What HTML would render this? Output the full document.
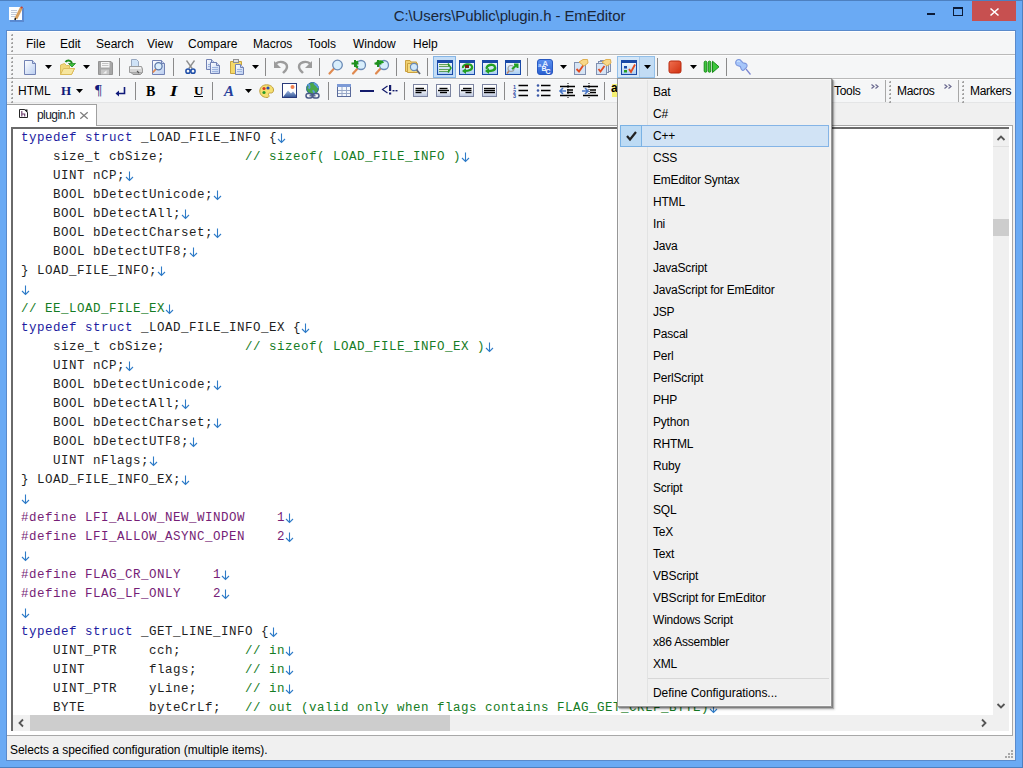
<!DOCTYPE html><html><head><meta charset="utf-8"><style>
*{margin:0;padding:0;box-sizing:border-box}
html,body{width:1023px;height:768px;overflow:hidden;background:#6aaaf4;font-family:"Liberation Sans",sans-serif;font-size:12px;color:#000}
.a{position:absolute}
svg{position:absolute;overflow:visible}
.t{position:absolute;white-space:pre;font-size:12px;line-height:14px}
.code{position:absolute;left:22px;font-family:"Liberation Mono",monospace;font-size:12.5px;letter-spacing:0.5px;line-height:19px;white-space:pre;color:#1e1e1e}
.k{color:#1c1ca0}.c{color:#157c24}.p{color:#761e76}.n{color:#2a86d0}
.sep{position:absolute;width:1px;background:#a0a0a0}
.arr{position:absolute;width:0;height:0;border-left:3.5px solid transparent;border-right:3.5px solid transparent;border-top:4px solid #000}
</style></head><body>
<div class="a" style="left:0px;top:0px;width:1023px;height:768px;background:#6aaaf4;border:1px solid #4d80c0;border-left:none"></div>
<div class="t" style="left:-2px;top:7px;width:1023px;text-align:center;font-size:15px;line-height:17px;color:#1a2638;letter-spacing:-0.1px">C:\Users\Public\plugin.h - EmEditor</div>
<div class="a" style="left:972px;top:1px;width:44px;height:20px;background:#c75050"></div>
<svg style="left:990px;top:8px" width="9" height="8"><path d="M0.5 0.5L8.5 7.5M8.5 0.5L0.5 7.5" stroke="#fff" stroke-width="1.6"/></svg>
<div class="a" style="left:953px;top:7px;width:10px;height:9px;border:1px solid #0c1c38;border-top-width:2px"></div>
<div class="a" style="left:927px;top:13px;width:8px;height:2px;background:#0c1c38"></div>
<div class="a" style="left:6px;top:30px;width:1010px;height:731px;background:#f0f0f0;border:1px solid #5a8acb"></div>
<div class="a" style="left:7px;top:31px;width:1008px;height:24px;background:#f5f6f7;border-top:1px solid #fff;border-bottom:1px solid #b9b9b9"></div>
<div class="a" style="left:7px;top:55px;width:1008px;height:24px;background:#f5f6f7;border-top:1px solid #fcfcfc;border-bottom:1px solid #b9b9b9"></div>
<div class="a" style="left:7px;top:79px;width:1008px;height:24px;background:#f5f6f7;border-top:1px solid #fcfcfc;border-bottom:1px solid #e4e5e6"></div>
<svg width="0" height="0" style="position:absolute"><defs>
<linearGradient id="gdoc" x1="0" y1="0" x2="1" y2="1"><stop offset="0" stop-color="#ffffff"/><stop offset="1" stop-color="#b9cdf0"/></linearGradient>
<linearGradient id="gfold" x1="0" y1="0" x2="0" y2="1"><stop offset="0" stop-color="#fbe9a8"/><stop offset="1" stop-color="#f0c850"/></linearGradient>
<linearGradient id="gwin" x1="0" y1="0" x2="0" y2="1"><stop offset="0" stop-color="#ffffff"/><stop offset="1" stop-color="#a9cdf2"/></linearGradient>
<linearGradient id="gbox" x1="0" y1="0" x2="0" y2="1"><stop offset="0" stop-color="#ffffff"/><stop offset="0.5" stop-color="#f4f6fa"/><stop offset="1" stop-color="#b8c4dc"/></linearGradient>
<linearGradient id="gspell" x1="0" y1="0" x2="0" y2="1"><stop offset="0" stop-color="#5a90f0"/><stop offset="1" stop-color="#2a5fd0"/></linearGradient>
<linearGradient id="gred" x1="0" y1="0" x2="1" y2="1"><stop offset="0" stop-color="#f07050"/><stop offset="1" stop-color="#d03010"/></linearGradient>
<linearGradient id="gmnt" x1="0" y1="0" x2="0" y2="1"><stop offset="0" stop-color="#9fb8e0"/><stop offset="1" stop-color="#3a5a9a"/></linearGradient>
</defs></svg>
<svg style="left:23px;top:59px" width="18" height="18" viewBox="0 0 18 18"><path d="M1.5 1.5H9.5L12.5 4.5V15.5H1.5Z" fill="url(#gdoc)" stroke="#7282b4"/><path d="M9.5 1.5V4.5H12.5" fill="#c8d4f0" stroke="#7282b4"/></svg>
<svg style="left:45px;top:65px" width="7" height="4"><path d="M0 0H7L3.5 4Z" fill="#000"/></svg>
<svg style="left:59px;top:59px" width="18" height="18" viewBox="0 0 18 18"><path d="M1.5 6L5.5 4.5L7.5 6.5H10.5V9.5H15.5L12.5 15.5H1.5Z" fill="#f0d77a" stroke="#dcbc5c"/><path d="M1.5 15.5L4.5 9.5H15.5L12.5 15.5Z" fill="#f7e69e" stroke="#dcbc5c"/><path d="M6.5 3C8 0.8 11.5 0.8 13 4" fill="none" stroke="#1f8a1f" stroke-width="2"/><path d="M9.5 4.5H16.5L13 8Z" fill="#3cbf3c" stroke="#1f8a1f" stroke-width="0.8"/></svg>
<svg style="left:83px;top:65px" width="7" height="4"><path d="M0 0H7L3.5 4Z" fill="#000"/></svg>
<svg style="left:97px;top:59px" width="18" height="18" viewBox="0 0 18 18"><path d="M1.5 2.5H14L15.5 4V15.5H1.5Z" fill="#a6a6a6" stroke="#949494"/><rect x="4" y="3" width="8.5" height="5.5" fill="#f6f6f6"/><path d="M5 4.5H11.5M5 6.5H11.5" stroke="#c4c4c4"/><rect x="4" y="10.5" width="8" height="5" fill="#c8c8c8"/><path d="M6 14.5L9.5 11.5V14.5Z" fill="#f4f4f4"/></svg>
<div class="a" style="left:119px;top:58px;width:1px;height:18px;background:#8a8a8a"></div>
<svg style="left:128px;top:59px" width="18" height="18" viewBox="0 0 18 18"><path d="M3.5 0.5H8.5L10.5 2.5V7.5H3.5Z" fill="#cfe2f6" stroke="#98a8c0"/><path d="M1.5 7.5H13.5L14.5 10V13.5H1.5Z" fill="#d4d4d4" stroke="#9c9c9c"/><rect x="2" y="8" width="11" height="2" fill="#f0f0f0"/><path d="M3 13.5L5 15.5H12.5L14.5 13.5" fill="#b8b8b8" stroke="#909090"/><path d="M9 12L11 14" stroke="#555" stroke-width="1.1"/></svg>
<svg style="left:151px;top:59px" width="18" height="18" viewBox="0 0 18 18"><path d="M1.5 1.5H10.5L13.5 4.5V15.5H1.5Z" fill="url(#gdoc)" stroke="#7282b4"/><path d="M10.5 1.5V4.5H13.5" fill="#c8d4f0" stroke="#7282b4"/><path d="M4.8 10.2L1.8 13.5" stroke="#e08850" stroke-width="1.8"/><circle cx="7.5" cy="7.3" r="3.6" fill="#dceefc" stroke="#5a76a8" stroke-width="1.2"/></svg>
<div class="a" style="left:173px;top:58px;width:1px;height:18px;background:#8a8a8a"></div>
<svg style="left:185px;top:59px" width="18" height="18" viewBox="0 0 18 18"><path d="M1.5 1.5L7.2 9.5M9.5 1.5L3.8 9.5" stroke="#8e8e8e" stroke-width="1.3"/><circle cx="3" cy="12.2" r="2.1" fill="none" stroke="#1f4ea8" stroke-width="1.5"/><circle cx="8" cy="12.2" r="2.1" fill="none" stroke="#1f4ea8" stroke-width="1.5"/></svg>
<svg style="left:205px;top:59px" width="18" height="18" viewBox="0 0 18 18"><path d="M1.5 0.5H6.5L9.5 3.5V10.5H1.5Z" fill="url(#gdoc)" stroke="#7282b4"/><path d="M6.5 0.5V3.5H9.5" fill="#c8d4f0" stroke="#7282b4"/><path d="M3 5.5H8" stroke="#9db4e0"/><path d="M3 7.5H8" stroke="#9db4e0"/><path d="M5.5 3.5H11.5L14.5 6.5V14.5H5.5Z" fill="url(#gdoc)" stroke="#7282b4"/><path d="M11.5 3.5V6.5H14.5" fill="#c8d4f0" stroke="#7282b4"/><path d="M7 8.5H13" stroke="#9db4e0"/><path d="M7 10.5H13" stroke="#9db4e0"/><path d="M7 12.5H13" stroke="#9db4e0"/></svg>
<svg style="left:229px;top:59px" width="18" height="18" viewBox="0 0 18 18"><path d="M1.5 2.5H12.5V14.5H1.5Z" fill="#f4d868" stroke="#c8a440"/><rect x="4.5" y="0.5" width="5" height="3" fill="#e0e0e0" stroke="#909090"/><path d="M6.5 5.5H11.5L14.5 8.5V15.5H6.5Z" fill="url(#gdoc)" stroke="#7282b4"/><path d="M11.5 5.5V8.5H14.5" fill="#c8d4f0" stroke="#7282b4"/><path d="M8 10.5H13" stroke="#9db4e0"/><path d="M8 12.5H13" stroke="#9db4e0"/></svg>
<svg style="left:252px;top:65px" width="7" height="4"><path d="M0 0H7L3.5 4Z" fill="#000"/></svg>
<div class="a" style="left:265px;top:58px;width:1px;height:18px;background:#8a8a8a"></div>
<svg style="left:273px;top:59px" width="18" height="18" viewBox="0 0 18 18"><path d="M3 4.5C7 1.5 14 3 14 8C14 10.5 12 12 10 14" fill="none" stroke="#9c9c9c" stroke-width="2.4"/><path d="M1 2V9H8L5.5 6.5L3 4Z" fill="#9c9c9c"/></svg>
<svg style="left:297px;top:59px" width="18" height="18" viewBox="0 0 18 18"><path d="M13 4.5C9 1.5 2 3 2 8C2 10.5 4 12 6 14" fill="none" stroke="#9c9c9c" stroke-width="2.4"/><path d="M15 2V9H8L10.5 6.5L13 4Z" fill="#9c9c9c"/></svg>
<div class="a" style="left:319px;top:58px;width:1px;height:18px;background:#8a8a8a"></div>
<svg style="left:327px;top:59px" width="18" height="18" viewBox="0 0 18 18"><path d="M7.62 8.879999999999999L2.5 14.5" stroke="#e08a50" stroke-width="2.2" stroke-linecap="round"/><circle cx="10.5" cy="6" r="4.8" fill="#d8eefc" stroke="#6a8ab6" stroke-width="1.3"/></svg>
<svg style="left:350px;top:59px" width="18" height="18" viewBox="0 0 18 18"><path d="M8.3 8.7L3 14.5" stroke="#e08a50" stroke-width="2.2" stroke-linecap="round"/><circle cx="11" cy="6" r="4.5" fill="#d8eefc" stroke="#6a8ab6" stroke-width="1.3"/><path d="M8 3C5 3 4.5 7 8 8.5" fill="none" stroke="#1fa01f" stroke-width="2.4"/><path d="M1.5 4.5H8.5M5 1V8" stroke="#1f8f1f" stroke-width="2"/></svg>
<svg style="left:373px;top:59px" width="18" height="18" viewBox="0 0 18 18"><path d="M8.3 8.7L3 14.5" stroke="#e08a50" stroke-width="2.2" stroke-linecap="round"/><circle cx="11" cy="6" r="4.5" fill="#d8eefc" stroke="#6a8ab6" stroke-width="1.3"/><path d="M3 5.5C5 1.5 9 2 10 4" fill="none" stroke="#1fa01f" stroke-width="2.4"/><path d="M1.5 4.5H8.5M5 1V8" stroke="#1f8f1f" stroke-width="2"/></svg>
<div class="a" style="left:396px;top:58px;width:1px;height:18px;background:#8a8a8a"></div>
<svg style="left:404px;top:59px" width="18" height="18" viewBox="0 0 18 18"><path d="M1.5 1.5H6L7 3H12.5V12.5H1.5Z" fill="#f0d070" stroke="#caa040"/><path d="M3.5 4.5H13.5V13.5H3.5Z" fill="#f6dc80" stroke="#caa040"/><path d="M12 10L16 15" stroke="#606878" stroke-width="1.8"/><circle cx="10" cy="8" r="3.6" fill="#d0e8fa" stroke="#6a8ab6" stroke-width="1.2"/></svg>
<div class="a" style="left:427px;top:58px;width:1px;height:18px;background:#8a8a8a"></div>
<div class="a" style="left:433px;top:56px;width:23px;height:22px;background:#c4ddf6;border:1px solid #86b6e6"></div>
<svg style="left:437px;top:60px" width="18" height="18" viewBox="0 0 18 18"><rect x="0.5" y="0.5" width="15" height="14" fill="url(#gwin)" stroke="#1a4aa8"/><rect x="0" y="0" width="16" height="3" fill="#1a4aa8"/><path d="M2 5.5H12M2 10.5H12" stroke="#3a8a2a" stroke-width="2.6"/><path d="M2 5.5H11M2 10.5H11" stroke="#f0f8e0" stroke-width="0.9"/><path d="M11 3.5L14 8L11 12.5" fill="none" stroke="#2a9a2a" stroke-width="1.5"/></svg>
<svg style="left:459px;top:60px" width="18" height="18" viewBox="0 0 18 18"><rect x="0.5" y="0.5" width="15" height="14" fill="url(#gwin)" stroke="#1a4aa8"/><rect x="0" y="0" width="16" height="3" fill="#1a4aa8"/><path d="M4 8C3 4 12 3 13 6.5C14 10 9 11 6 11" fill="none" stroke="#23a023" stroke-width="2.2"/><path d="M3 11L7 8V14Z" fill="#23a023"/><rect x="6" y="5" width="4" height="3" fill="#7a1f10"/></svg>
<svg style="left:482px;top:60px" width="18" height="18" viewBox="0 0 18 18"><rect x="0.5" y="0.5" width="15" height="14" fill="url(#gwin)" stroke="#1a4aa8"/><rect x="0" y="0" width="16" height="3" fill="#1a4aa8"/><path d="M5 9C3 5 12 3 13 7C14 10.5 9 11 6 11" fill="none" stroke="#23a023" stroke-width="2.4"/><path d="M3 11L7 8V14Z" fill="#23a023"/></svg>
<svg style="left:505px;top:60px" width="18" height="18" viewBox="0 0 18 18"><rect x="0.5" y="0.5" width="15" height="14" fill="url(#gwin)" stroke="#1a4aa8"/><rect x="0" y="0" width="16" height="3" fill="#1a4aa8"/><circle cx="6" cy="8.5" r="3" fill="none" stroke="#a0a0a0" stroke-width="1.2"/><path d="M4 11L2 13.5" stroke="#c08060" stroke-width="1.5"/><path d="M7 9L12 5M9 4.5H12.5V8" fill="none" stroke="#23a023" stroke-width="2"/></svg>
<div class="a" style="left:527px;top:58px;width:1px;height:18px;background:#8a8a8a"></div>
<svg style="left:537px;top:59px" width="18" height="18" viewBox="0 0 18 18"><rect x="0.5" y="0.5" width="15" height="15" rx="2.5" fill="url(#gspell)" stroke="#2858c0"/><text x="1" y="8" font-family="Liberation Sans" font-size="6" font-weight="bold" fill="#c8d8ff">a</text><text x="5.5" y="7" font-family="Liberation Sans" font-size="7.5" font-weight="bold" fill="#e0ebff">A</text><text x="4.5" y="11.5" font-family="Liberation Sans" font-size="7" font-weight="bold" fill="#f4f8ff">B</text><text x="8.5" y="15" font-family="Liberation Sans" font-size="7" font-weight="bold" fill="#ffffff">C</text></svg>
<svg style="left:560px;top:65px" width="7" height="4"><path d="M0 0H7L3.5 4Z" fill="#000"/></svg>
<svg style="left:574px;top:59px" width="18" height="18" viewBox="0 0 18 18"><rect x="0.5" y="3.5" width="11" height="12" fill="#d6e4f4" stroke="#8090b0"/><path d="M2.5 10L5 12.5L9.5 6" fill="none" stroke="#e04a20" stroke-width="1.8"/><path d="M5 3L9 0.5H13.5L14 4L10 7Z" fill="#f8d888" stroke="#e0b050"/></svg>
<svg style="left:596px;top:59px" width="18" height="18" viewBox="0 0 18 18"><rect x="4.5" y="1.5" width="10" height="11" fill="#e0e8f4" stroke="#8090b0"/><rect x="2.5" y="2.5" width="10" height="11" fill="#e0e8f4" stroke="#8090b0"/><rect x="0.5" y="4.5" width="10" height="11" fill="#d6e4f4" stroke="#8090b0"/><path d="M2.5 10L4.5 12.5L8.5 7" fill="none" stroke="#e04a20" stroke-width="1.8"/><path d="M6 3L10 0.5H14.5L15 4L11 7Z" fill="#f8d888" stroke="#e0b050"/></svg>
<div class="a" style="left:617px;top:56px;width:38px;height:22px;background:#d5e7f8;border:1px solid #92bfe8"></div>
<div class="a" style="left:639px;top:57px;width:15px;height:20px;background:#c2dcf4;border-left:1px solid #a4c8ec"></div>
<svg style="left:621px;top:60px" width="18" height="18" viewBox="0 0 18 18"><rect x="0.5" y="0.5" width="15" height="14" fill="url(#gwin)" stroke="#1a4aa8"/><rect x="0" y="0" width="16" height="3" fill="#1a4aa8"/><rect x="3" y="6" width="3" height="2.5" fill="#1a4aa8"/><rect x="3" y="10" width="3" height="2.5" fill="#23a023"/><path d="M8 9L10 12L14 4.5" fill="none" stroke="#e04a20" stroke-width="1.8"/></svg>
<svg style="left:644px;top:65px" width="7" height="4"><path d="M0 0H7L3.5 4Z" fill="#000"/></svg>
<div class="a" style="left:657px;top:58px;width:1px;height:18px;background:#8a8a8a"></div>
<svg style="left:668px;top:60px" width="18" height="18" viewBox="0 0 18 18"><rect x="1" y="1" width="12" height="12" rx="2" fill="url(#gred)" stroke="#b82a10"/></svg>
<svg style="left:690px;top:65px" width="7" height="4"><path d="M0 0H7L3.5 4Z" fill="#000"/></svg>
<svg style="left:703px;top:60px" width="18" height="18" viewBox="0 0 18 18"><rect x="1.2" y="1.2" width="2.6" height="11" rx="1.2" fill="#3cc83c" stroke="#1a8a1a"/><rect x="5.2" y="1.2" width="2.6" height="11" rx="1.2" fill="#3cc83c" stroke="#1a8a1a"/><path d="M9.5 1.2L16 6.8L9.5 12.5Z" fill="#3cc83c" stroke="#1a8a1a"/></svg>
<div class="a" style="left:726px;top:58px;width:1px;height:18px;background:#8a8a8a"></div>
<svg style="left:734px;top:58px" width="18" height="18" viewBox="0 0 18 18"><path d="M12 11L16.5 16.5" stroke="#7a84d0" stroke-width="1.2"/><path d="M2.2 2.8C3.2 1.2 6 1.2 7 2.6L9 4.8L12 5.6C13.5 6.5 13.3 8.6 12.3 9.6L10.3 11.7C9.3 12.7 7.8 12.7 7.3 11.2L6.3 8.5L3.2 7.6C1.7 7 1.2 4.2 2.2 2.8Z" fill="#a6c6fa" stroke="#7b95dc" stroke-width="1.1"/><path d="M3 4C3.5 3 5 2.8 6 3.6" fill="none" stroke="#d8ecff" stroke-width="1"/></svg>
<div class="t" style="left:18px;top:83px;font-size:12px;line-height:16px;color:#000">HTML</div>
<div class="t" style="left:61px;top:82px;font-family:'Liberation Serif';font-weight:bold;font-size:13px;line-height:17px;color:#101a7a">H</div>
<svg style="left:76px;top:89px" width="7" height="4"><path d="M0 0H7L3.5 4Z" fill="#000"/></svg>
<div class="t" style="left:95px;top:82px;font-family:'Liberation Serif';font-weight:normal;font-size:15px;line-height:17px;color:#101a7a">¶</div>
<svg style="left:115px;top:87px" width="12" height="12" viewBox="0 0 12 12"><path d="M9.5 0V6.5H2" fill="none" stroke="#101a7a" stroke-width="1.6"/><path d="M0.5 6.5L4 3.5V9.5Z" fill="#101a7a"/></svg>
<div class="a" style="left:135px;top:82px;width:1px;height:18px;background:#8a8a8a"></div>
<div class="t" style="left:146px;top:83px;font-family:'Liberation Serif';font-weight:bold;font-size:14px;line-height:17px;color:#000">B</div>
<div class="t" style="left:170px;top:83px;font-family:'Liberation Serif';font-weight:bold;font-style:italic;font-size:14px;transform:scaleX(1.35);transform-origin:0 0;line-height:17px;color:#000">I</div>
<div class="t" style="left:194px;top:82px;font-family:'Liberation Serif';font-weight:bold;font-size:13px;line-height:17px;color:#000">U</div>
<div class="a" style="left:194px;top:96px;width:9px;height:1px;background:#000"></div>
<div class="a" style="left:212px;top:82px;width:1px;height:18px;background:#8a8a8a"></div>
<div class="t" style="left:224px;top:83px;font-family:'Liberation Serif';font-weight:bold;font-style:italic;font-size:15px;line-height:17px;color:#27409c">A</div>
<svg style="left:245px;top:89px" width="7" height="4"><path d="M0 0H7L3.5 4Z" fill="#000"/></svg>
<svg style="left:259px;top:84px" width="16" height="16" viewBox="0 0 16 16"><path d="M7.5 0.8C3 0.8 0.8 4 0.8 7C0.8 11 4 13.5 8 13.5C10 13.5 10.5 12 9.5 10.5C9 9.5 10 8.8 11.5 9C13.5 9.2 14.5 8 14.5 6C14.5 3 11.5 0.8 7.5 0.8Z" fill="#f6e070" stroke="#c0a040"/><circle cx="5" cy="4.5" r="1.6" fill="#d83a20"/><circle cx="9" cy="4" r="1.6" fill="#2a4ab0"/><circle cx="5" cy="8.5" r="1.6" fill="#2a9a2a"/></svg>
<svg style="left:282px;top:83px" width="16" height="16" viewBox="0 0 16 16"><rect x="0.5" y="0.5" width="14" height="14" fill="#fff" stroke="#2a3a7a"/><path d="M1 14L6 7.5L9 10.5L11 8.5L14 12V14Z" fill="url(#gmnt)"/><circle cx="10.5" cy="4" r="2" fill="#f08050"/></svg>
<svg style="left:304px;top:82px" width="17" height="17" viewBox="0 0 17 17"><circle cx="8.5" cy="6.5" r="6" fill="#4aa84a" stroke="#2a6a9a"/><path d="M3.5 3C5.5 2 6.5 5 4.5 6.5M10 1.2C11.5 3 13.8 3.5 14 6M8.5 8.5C10.5 9.5 10.5 11 9.5 12" fill="none" stroke="#5a9ae0" stroke-width="1.8"/><rect x="2" y="11.5" width="6.5" height="4.5" rx="2.2" fill="none" stroke="#4a5a88" stroke-width="1.5"/><rect x="8.5" y="11.5" width="6.5" height="4.5" rx="2.2" fill="none" stroke="#4a5a88" stroke-width="1.5"/><path d="M5.5 13.8H11.5" stroke="#4a5a88" stroke-width="1.3"/></svg>
<div class="a" style="left:328px;top:82px;width:1px;height:18px;background:#8a8a8a"></div>
<svg style="left:336px;top:83px" width="16" height="16" viewBox="0 0 16 16"><rect x="1.5" y="1.5" width="13" height="12" fill="#f4f8fc" stroke="#5a6a9a"/><rect x="1" y="1" width="14" height="3" fill="#7c9ad6"/><path d="M6 4V13M10.5 4V13M2 7.5H14M2 10.5H14" stroke="#98a8c8"/></svg>
<div class="a" style="left:360px;top:90px;width:14px;height:1.5px;background:#141c6c"></div>
<svg style="left:381px;top:85px" width="18" height="10" viewBox="0 0 18 10"><path d="M6.5 1L1.5 4.5L6.5 8" fill="none" stroke="#141c6c" stroke-width="1.2"/><rect x="8" y="0" width="2.2" height="6" fill="#141c6c"/><rect x="8" y="7.5" width="2.2" height="2" fill="#141c6c"/><rect x="11.5" y="5" width="2" height="1.4" fill="#141c6c"/><rect x="14.5" y="5" width="2" height="1.4" fill="#141c6c"/></svg>
<div class="a" style="left:404px;top:82px;width:1px;height:18px;background:#8a8a8a"></div>
<svg style="left:413px;top:84px" width="16" height="14" viewBox="0 0 16 14"><rect x="0.5" y="0.5" width="14" height="12" fill="url(#gbox)" stroke="#7c84a0"/><path d="M2.5 4.5H11" stroke="#000" stroke-width="1.4"/><path d="M2.5 6.5H13" stroke="#000" stroke-width="1.4"/><path d="M2.5 8.5H8.5" stroke="#000" stroke-width="1.4"/></svg>
<svg style="left:436px;top:84px" width="16" height="14" viewBox="0 0 16 14"><rect x="0.5" y="0.5" width="14" height="12" fill="url(#gbox)" stroke="#7c84a0"/><path d="M3.5 4.5H11.5" stroke="#000" stroke-width="1.4"/><path d="M2 6.5H13" stroke="#000" stroke-width="1.4"/><path d="M4 8.5H11" stroke="#000" stroke-width="1.4"/></svg>
<svg style="left:459px;top:84px" width="16" height="14" viewBox="0 0 16 14"><rect x="0.5" y="0.5" width="14" height="12" fill="url(#gbox)" stroke="#7c84a0"/><path d="M4 4.5H12.5" stroke="#000" stroke-width="1.4"/><path d="M2 6.5H12.5" stroke="#000" stroke-width="1.4"/><path d="M6.5 8.5H12.5" stroke="#000" stroke-width="1.4"/></svg>
<svg style="left:482px;top:84px" width="16" height="14" viewBox="0 0 16 14"><rect x="0.5" y="0.5" width="14" height="12" fill="url(#gbox)" stroke="#7c84a0"/><path d="M2 4.5H13" stroke="#000" stroke-width="1.4"/><path d="M2 6.5H13" stroke="#000" stroke-width="1.4"/><path d="M2 8.5H13" stroke="#000" stroke-width="1.4"/></svg>
<div class="a" style="left:504px;top:82px;width:1px;height:18px;background:#8a8a8a"></div>
<svg style="left:513px;top:83px" width="16" height="16" viewBox="0 0 16 16"><text x="0" y="6" font-family="Liberation Sans" font-size="5.5" font-weight="bold" fill="#3050a8">1</text><text x="0" y="10.5" font-family="Liberation Sans" font-size="5.5" font-weight="bold" fill="#3050a8">2</text><text x="0" y="15" font-family="Liberation Sans" font-size="5.5" font-weight="bold" fill="#3050a8">3</text><path d="M5.5 2.5H15M5.5 7.5H15M5.5 12.5H15" stroke="#000" stroke-width="1.5"/></svg>
<svg style="left:536px;top:83px" width="16" height="16" viewBox="0 0 16 16"><circle cx="2" cy="2.5" r="1.3" fill="#3a58a8"/><circle cx="2" cy="7.5" r="1.3" fill="#3a58a8"/><circle cx="2" cy="12.5" r="1.3" fill="#3a58a8"/><path d="M5 2.5H14.5M5 7.5H14.5M5 12.5H14.5" stroke="#000" stroke-width="1.5"/></svg>
<svg style="left:559px;top:83px" width="17" height="16" viewBox="0 0 17 16"><path d="M9 0V16" stroke="#000" stroke-dasharray="1 1"/><path d="M1 3.5H16M8 7H14M8 9.5H14M1 12.5H16" stroke="#000" stroke-width="1.5"/><path d="M1 8H7M4 5L1 8L4 11" fill="none" stroke="#4a78c8" stroke-width="1.6"/></svg>
<svg style="left:582px;top:83px" width="17" height="16" viewBox="0 0 17 16"><path d="M7 0V16" stroke="#000" stroke-dasharray="1 1"/><path d="M1 3.5H16M8 7H14M8 9.5H14M1 12.5H16" stroke="#000" stroke-width="1.5"/><path d="M0 8H6M3 5L6 8L3 11" fill="none" stroke="#4a78c8" stroke-width="1.6"/></svg>
<div class="a" style="left:604px;top:82px;width:1px;height:18px;background:#8a8a8a"></div>
<div class="a" style="left:612px;top:84px;width:5px;height:13px;background:#f6f070"></div>
<div class="t" style="left:611px;top:81px;font-weight:bold;font-size:12px;line-height:14px;color:#000">a</div>
<div class="a" style="left:11px;top:34px;width:2px;height:2px;background:linear-gradient(135deg,#d4d4d4 0 50%,#a2a2a2 50% 100%)"></div>
<div class="a" style="left:11px;top:38px;width:2px;height:2px;background:linear-gradient(135deg,#d4d4d4 0 50%,#a2a2a2 50% 100%)"></div>
<div class="a" style="left:11px;top:42px;width:2px;height:2px;background:linear-gradient(135deg,#d4d4d4 0 50%,#a2a2a2 50% 100%)"></div>
<div class="a" style="left:11px;top:46px;width:2px;height:2px;background:linear-gradient(135deg,#d4d4d4 0 50%,#a2a2a2 50% 100%)"></div>
<div class="a" style="left:11px;top:50px;width:2px;height:2px;background:linear-gradient(135deg,#d4d4d4 0 50%,#a2a2a2 50% 100%)"></div>
<div class="a" style="left:11px;top:57px;width:2px;height:2px;background:linear-gradient(135deg,#d4d4d4 0 50%,#a2a2a2 50% 100%)"></div>
<div class="a" style="left:11px;top:61px;width:2px;height:2px;background:linear-gradient(135deg,#d4d4d4 0 50%,#a2a2a2 50% 100%)"></div>
<div class="a" style="left:11px;top:65px;width:2px;height:2px;background:linear-gradient(135deg,#d4d4d4 0 50%,#a2a2a2 50% 100%)"></div>
<div class="a" style="left:11px;top:69px;width:2px;height:2px;background:linear-gradient(135deg,#d4d4d4 0 50%,#a2a2a2 50% 100%)"></div>
<div class="a" style="left:11px;top:73px;width:2px;height:2px;background:linear-gradient(135deg,#d4d4d4 0 50%,#a2a2a2 50% 100%)"></div>
<div class="a" style="left:11px;top:77px;width:2px;height:2px;background:linear-gradient(135deg,#d4d4d4 0 50%,#a2a2a2 50% 100%)"></div>
<div class="a" style="left:11px;top:81px;width:2px;height:2px;background:linear-gradient(135deg,#d4d4d4 0 50%,#a2a2a2 50% 100%)"></div>
<div class="a" style="left:11px;top:85px;width:2px;height:2px;background:linear-gradient(135deg,#d4d4d4 0 50%,#a2a2a2 50% 100%)"></div>
<div class="a" style="left:11px;top:89px;width:2px;height:2px;background:linear-gradient(135deg,#d4d4d4 0 50%,#a2a2a2 50% 100%)"></div>
<div class="a" style="left:11px;top:93px;width:2px;height:2px;background:linear-gradient(135deg,#d4d4d4 0 50%,#a2a2a2 50% 100%)"></div>
<div class="a" style="left:11px;top:97px;width:2px;height:2px;background:linear-gradient(135deg,#d4d4d4 0 50%,#a2a2a2 50% 100%)"></div>
<div class="a" style="left:11px;top:101px;width:2px;height:2px;background:linear-gradient(135deg,#d4d4d4 0 50%,#a2a2a2 50% 100%)"></div>
<div class="t" style="left:26px;top:37px;">File</div>
<div class="t" style="left:60px;top:37px;">Edit</div>
<div class="t" style="left:96px;top:37px;">Search</div>
<div class="t" style="left:147px;top:37px;">View</div>
<div class="t" style="left:188px;top:37px;">Compare</div>
<div class="t" style="left:253px;top:37px;">Macros</div>
<div class="t" style="left:308px;top:37px;">Tools</div>
<div class="t" style="left:353px;top:37px;">Window</div>
<div class="t" style="left:413px;top:37px;">Help</div>
<div class="a" style="left:7px;top:103px;width:1008px;height:23px;background:#f0f0f0"></div>
<div class="a" style="left:7px;top:125px;width:1006px;height:611px;background:#fff;border-top:1px solid #a8a8a8;border-right:1px solid #a8a8a8;border-bottom:1px solid #a8a8a8"></div>
<div class="a" style="left:7px;top:104px;width:90px;height:22px;background:#fff;border-top:1px solid #a0a0a0;border-right:1px solid #a0a0a0"></div>
<svg style="left:19px;top:109px" width="9" height="10"><path d="M0.5 0.5H5.5L8.5 3.5V8.5H0.5Z" fill="#fff" stroke="#262626"/><path d="M5 0.5L8.5 4V0.5Z" fill="#262626"/><path d="M2.8 2V7.5M2.8 5H5.7V7.5" fill="none" stroke="#6a3a6a" stroke-width="1.1"/></svg>
<div class="t" style="left:37px;top:108px;color:#141a2a;font-size:12px;letter-spacing:-0.55px">plugin.h</div>
<svg style="left:80px;top:112px" width="8" height="7"><path d="M0.3 0.3L7.7 6.7M7.7 0.3L0.3 6.7" stroke="#7c7c7c" stroke-width="1.2"/></svg>
<div class="a" style="left:11px;top:127px;width:998px;height:604px;border-left:2px solid #6a6a6a;border-top:2px solid #6a6a6a"></div>
<div class="a" style="left:13px;top:129px;width:980px;height:586px;overflow:hidden">
<div class="code" style="left:8px;top:0px"><span class="k">typedef</span> <span class="k">struct</span> _LOAD_FILE_INFO {</div>
<div class="code" style="left:8px;top:19px">    size_t cbSize;          <span class="c">// sizeof( LOAD_FILE_INFO )</span></div>
<div class="code" style="left:8px;top:38px">    UINT nCP;</div>
<div class="code" style="left:8px;top:57px">    BOOL bDetectUnicode;</div>
<div class="code" style="left:8px;top:76px">    BOOL bDetectAll;</div>
<div class="code" style="left:8px;top:95px">    BOOL bDetectCharset;</div>
<div class="code" style="left:8px;top:114px">    BOOL bDetectUTF8;</div>
<div class="code" style="left:8px;top:133px">} LOAD_FILE_INFO;</div>
<div class="code" style="left:8px;top:152px"></div>
<div class="code" style="left:8px;top:171px"><span class="c">// EE_LOAD_FILE_EX</span></div>
<div class="code" style="left:8px;top:190px"><span class="k">typedef</span> <span class="k">struct</span> _LOAD_FILE_INFO_EX {</div>
<div class="code" style="left:8px;top:209px">    size_t cbSize;          <span class="c">// sizeof( LOAD_FILE_INFO_EX )</span></div>
<div class="code" style="left:8px;top:228px">    UINT nCP;</div>
<div class="code" style="left:8px;top:247px">    BOOL bDetectUnicode;</div>
<div class="code" style="left:8px;top:266px">    BOOL bDetectAll;</div>
<div class="code" style="left:8px;top:285px">    BOOL bDetectCharset;</div>
<div class="code" style="left:8px;top:304px">    BOOL bDetectUTF8;</div>
<div class="code" style="left:8px;top:323px">    UINT nFlags;</div>
<div class="code" style="left:8px;top:342px">} LOAD_FILE_INFO_EX;</div>
<div class="code" style="left:8px;top:361px"></div>
<div class="code" style="left:8px;top:380px"><span class="p">#define LFI_ALLOW_NEW_WINDOW    1</span></div>
<div class="code" style="left:8px;top:399px"><span class="p">#define LFI_ALLOW_ASYNC_OPEN    2</span></div>
<div class="code" style="left:8px;top:418px"></div>
<div class="code" style="left:8px;top:437px"><span class="p">#define FLAG_CR_ONLY    1</span></div>
<div class="code" style="left:8px;top:456px"><span class="p">#define FLAG_LF_ONLY    2</span></div>
<div class="code" style="left:8px;top:475px"></div>
<div class="code" style="left:8px;top:494px"><span class="k">typedef</span> <span class="k">struct</span> _GET_LINE_INFO {</div>
<div class="code" style="left:8px;top:513px">    UINT_PTR    cch;        <span class="c">// in</span></div>
<div class="code" style="left:8px;top:532px">    UINT        flags;      <span class="c">// in</span></div>
<div class="code" style="left:8px;top:551px">    UINT_PTR    yLine;      <span class="c">// in</span></div>
<div class="code" style="left:8px;top:570px">    BYTE        byteCrLf;   <span class="c">// out (valid only when flags contains FLAG_GET_CRLF_BYTE)</span></div>
</div>
<svg style="left:277px;top:133px" width="9" height="11"><path d="M4.5 0.5V9.5M1 6L4.5 9.5L8 6" fill="none" stroke="#2f7cc8" stroke-width="1.1"/></svg>
<svg style="left:461px;top:152px" width="9" height="11"><path d="M4.5 0.5V9.5M1 6L4.5 9.5L8 6" fill="none" stroke="#2f7cc8" stroke-width="1.1"/></svg>
<svg style="left:125px;top:171px" width="9" height="11"><path d="M4.5 0.5V9.5M1 6L4.5 9.5L8 6" fill="none" stroke="#2f7cc8" stroke-width="1.1"/></svg>
<svg style="left:213px;top:190px" width="9" height="11"><path d="M4.5 0.5V9.5M1 6L4.5 9.5L8 6" fill="none" stroke="#2f7cc8" stroke-width="1.1"/></svg>
<svg style="left:181px;top:209px" width="9" height="11"><path d="M4.5 0.5V9.5M1 6L4.5 9.5L8 6" fill="none" stroke="#2f7cc8" stroke-width="1.1"/></svg>
<svg style="left:213px;top:228px" width="9" height="11"><path d="M4.5 0.5V9.5M1 6L4.5 9.5L8 6" fill="none" stroke="#2f7cc8" stroke-width="1.1"/></svg>
<svg style="left:189px;top:247px" width="9" height="11"><path d="M4.5 0.5V9.5M1 6L4.5 9.5L8 6" fill="none" stroke="#2f7cc8" stroke-width="1.1"/></svg>
<svg style="left:157px;top:266px" width="9" height="11"><path d="M4.5 0.5V9.5M1 6L4.5 9.5L8 6" fill="none" stroke="#2f7cc8" stroke-width="1.1"/></svg>
<svg style="left:21px;top:285px" width="9" height="11"><path d="M4.5 0.5V9.5M1 6L4.5 9.5L8 6" fill="none" stroke="#2f7cc8" stroke-width="1.1"/></svg>
<svg style="left:165px;top:304px" width="9" height="11"><path d="M4.5 0.5V9.5M1 6L4.5 9.5L8 6" fill="none" stroke="#2f7cc8" stroke-width="1.1"/></svg>
<svg style="left:301px;top:323px" width="9" height="11"><path d="M4.5 0.5V9.5M1 6L4.5 9.5L8 6" fill="none" stroke="#2f7cc8" stroke-width="1.1"/></svg>
<svg style="left:485px;top:342px" width="9" height="11"><path d="M4.5 0.5V9.5M1 6L4.5 9.5L8 6" fill="none" stroke="#2f7cc8" stroke-width="1.1"/></svg>
<svg style="left:125px;top:361px" width="9" height="11"><path d="M4.5 0.5V9.5M1 6L4.5 9.5L8 6" fill="none" stroke="#2f7cc8" stroke-width="1.1"/></svg>
<svg style="left:213px;top:380px" width="9" height="11"><path d="M4.5 0.5V9.5M1 6L4.5 9.5L8 6" fill="none" stroke="#2f7cc8" stroke-width="1.1"/></svg>
<svg style="left:181px;top:399px" width="9" height="11"><path d="M4.5 0.5V9.5M1 6L4.5 9.5L8 6" fill="none" stroke="#2f7cc8" stroke-width="1.1"/></svg>
<svg style="left:213px;top:418px" width="9" height="11"><path d="M4.5 0.5V9.5M1 6L4.5 9.5L8 6" fill="none" stroke="#2f7cc8" stroke-width="1.1"/></svg>
<svg style="left:189px;top:437px" width="9" height="11"><path d="M4.5 0.5V9.5M1 6L4.5 9.5L8 6" fill="none" stroke="#2f7cc8" stroke-width="1.1"/></svg>
<svg style="left:149px;top:456px" width="9" height="11"><path d="M4.5 0.5V9.5M1 6L4.5 9.5L8 6" fill="none" stroke="#2f7cc8" stroke-width="1.1"/></svg>
<svg style="left:181px;top:475px" width="9" height="11"><path d="M4.5 0.5V9.5M1 6L4.5 9.5L8 6" fill="none" stroke="#2f7cc8" stroke-width="1.1"/></svg>
<svg style="left:21px;top:494px" width="9" height="11"><path d="M4.5 0.5V9.5M1 6L4.5 9.5L8 6" fill="none" stroke="#2f7cc8" stroke-width="1.1"/></svg>
<svg style="left:285px;top:513px" width="9" height="11"><path d="M4.5 0.5V9.5M1 6L4.5 9.5L8 6" fill="none" stroke="#2f7cc8" stroke-width="1.1"/></svg>
<svg style="left:285px;top:532px" width="9" height="11"><path d="M4.5 0.5V9.5M1 6L4.5 9.5L8 6" fill="none" stroke="#2f7cc8" stroke-width="1.1"/></svg>
<svg style="left:21px;top:551px" width="9" height="11"><path d="M4.5 0.5V9.5M1 6L4.5 9.5L8 6" fill="none" stroke="#2f7cc8" stroke-width="1.1"/></svg>
<svg style="left:221px;top:570px" width="9" height="11"><path d="M4.5 0.5V9.5M1 6L4.5 9.5L8 6" fill="none" stroke="#2f7cc8" stroke-width="1.1"/></svg>
<svg style="left:221px;top:589px" width="9" height="11"><path d="M4.5 0.5V9.5M1 6L4.5 9.5L8 6" fill="none" stroke="#2f7cc8" stroke-width="1.1"/></svg>
<svg style="left:21px;top:608px" width="9" height="11"><path d="M4.5 0.5V9.5M1 6L4.5 9.5L8 6" fill="none" stroke="#2f7cc8" stroke-width="1.1"/></svg>
<svg style="left:269px;top:627px" width="9" height="11"><path d="M4.5 0.5V9.5M1 6L4.5 9.5L8 6" fill="none" stroke="#2f7cc8" stroke-width="1.1"/></svg>
<svg style="left:285px;top:646px" width="9" height="11"><path d="M4.5 0.5V9.5M1 6L4.5 9.5L8 6" fill="none" stroke="#2f7cc8" stroke-width="1.1"/></svg>
<svg style="left:285px;top:665px" width="9" height="11"><path d="M4.5 0.5V9.5M1 6L4.5 9.5L8 6" fill="none" stroke="#2f7cc8" stroke-width="1.1"/></svg>
<svg style="left:285px;top:684px" width="9" height="11"><path d="M4.5 0.5V9.5M1 6L4.5 9.5L8 6" fill="none" stroke="#2f7cc8" stroke-width="1.1"/></svg>
<svg style="left:709px;top:703px" width="9" height="11"><path d="M4.5 0.5V9.5M1 6L4.5 9.5L8 6" fill="none" stroke="#2f7cc8" stroke-width="1.1"/></svg>
<div class="a" style="left:993px;top:129px;width:16px;height:586px;background:#f0f0f0"></div>
<div class="a" style="left:993px;top:146px;width:16px;height:1px;background:#e0e0e0"></div>
<div class="a" style="left:993px;top:219px;width:16px;height:17px;background:#cdcdcd"></div>
<div class="a" style="left:13px;top:715px;width:980px;height:16px;background:#f0f0f0"></div>
<div class="a" style="left:30px;top:715px;width:420px;height:16px;background:#cdcdcd"></div>
<div class="a" style="left:993px;top:715px;width:16px;height:16px;background:#f0f0f0"></div>
<svg style="left:996px;top:134px" width="10" height="8"><path d="M1.5 6L5 2.5L8.5 6" fill="none" stroke="#555" stroke-width="1.8"/></svg>
<svg style="left:996px;top:702px" width="10" height="8"><path d="M1.5 2L5 5.5L8.5 2" fill="none" stroke="#555" stroke-width="1.8"/></svg>
<svg style="left:17px;top:718px" width="8" height="10"><path d="M6 1.5L2.5 5L6 8.5" fill="none" stroke="#555" stroke-width="1.8"/></svg>
<svg style="left:980px;top:718px" width="8" height="10"><path d="M2 1.5L5.5 5L2 8.5" fill="none" stroke="#555" stroke-width="1.8"/></svg>
<div class="a" style="left:1011px;top:750px;width:2px;height:2px;background:#a8a8a8"></div>
<div class="a" style="left:1008px;top:753px;width:2px;height:2px;background:#a8a8a8"></div>
<div class="a" style="left:1011px;top:753px;width:2px;height:2px;background:#a8a8a8"></div>
<div class="a" style="left:1005px;top:756px;width:2px;height:2px;background:#a8a8a8"></div>
<div class="a" style="left:1008px;top:756px;width:2px;height:2px;background:#a8a8a8"></div>
<div class="a" style="left:1011px;top:756px;width:2px;height:2px;background:#a8a8a8"></div>
<svg style="left:8px;top:6px" width="17" height="17"><rect x="2" y="2" width="14" height="14" fill="#4a6ab0" opacity="0.5"/><rect x="1" y="1" width="13" height="13" fill="#fbfdff"/><path d="M3 4.5H9M3 6.5H9M3 8.5H8M3 10.5H7" stroke="#c0c8d8"/><path d="M13.5 1.5L8 12.5" stroke="#d8a060" stroke-width="3"/><path d="M13 1L14.5 2" stroke="#c04040" stroke-width="2"/><path d="M7.5 12L7 14" stroke="#111" stroke-width="1.6"/></svg>
<div class="t" style="left:834px;top:83px;font-size:12px;line-height:16px;letter-spacing:-0.3px">Tools</div>
<svg style="left:871px;top:84px" width="8" height="5"><path d="M0.5 0.5L3 2.5L0.5 4.5M4.5 0.5L7 2.5L4.5 4.5" fill="none" stroke="#6a6a90" stroke-width="1.2"/></svg>
<div class="a" style="left:885px;top:80px;width:1px;height:22px;background:#a8a8a8"></div>
<div class="a" style="left:889px;top:81px;width:2px;height:2px;background:linear-gradient(135deg,#d4d4d4 0 50%,#a2a2a2 50% 100%)"></div>
<div class="a" style="left:889px;top:85px;width:2px;height:2px;background:linear-gradient(135deg,#d4d4d4 0 50%,#a2a2a2 50% 100%)"></div>
<div class="a" style="left:889px;top:89px;width:2px;height:2px;background:linear-gradient(135deg,#d4d4d4 0 50%,#a2a2a2 50% 100%)"></div>
<div class="a" style="left:889px;top:93px;width:2px;height:2px;background:linear-gradient(135deg,#d4d4d4 0 50%,#a2a2a2 50% 100%)"></div>
<div class="a" style="left:889px;top:97px;width:2px;height:2px;background:linear-gradient(135deg,#d4d4d4 0 50%,#a2a2a2 50% 100%)"></div>
<div class="a" style="left:889px;top:101px;width:2px;height:2px;background:linear-gradient(135deg,#d4d4d4 0 50%,#a2a2a2 50% 100%)"></div>
<div class="t" style="left:897px;top:83px;font-size:12px;line-height:16px;letter-spacing:-0.3px">Macros</div>
<svg style="left:944px;top:84px" width="8" height="5"><path d="M0.5 0.5L3 2.5L0.5 4.5M4.5 0.5L7 2.5L4.5 4.5" fill="none" stroke="#6a6a90" stroke-width="1.2"/></svg>
<div class="a" style="left:958px;top:80px;width:1px;height:22px;background:#a8a8a8"></div>
<div class="a" style="left:962px;top:81px;width:2px;height:2px;background:linear-gradient(135deg,#d4d4d4 0 50%,#a2a2a2 50% 100%)"></div>
<div class="a" style="left:962px;top:85px;width:2px;height:2px;background:linear-gradient(135deg,#d4d4d4 0 50%,#a2a2a2 50% 100%)"></div>
<div class="a" style="left:962px;top:89px;width:2px;height:2px;background:linear-gradient(135deg,#d4d4d4 0 50%,#a2a2a2 50% 100%)"></div>
<div class="a" style="left:962px;top:93px;width:2px;height:2px;background:linear-gradient(135deg,#d4d4d4 0 50%,#a2a2a2 50% 100%)"></div>
<div class="a" style="left:962px;top:97px;width:2px;height:2px;background:linear-gradient(135deg,#d4d4d4 0 50%,#a2a2a2 50% 100%)"></div>
<div class="a" style="left:962px;top:101px;width:2px;height:2px;background:linear-gradient(135deg,#d4d4d4 0 50%,#a2a2a2 50% 100%)"></div>
<div class="t" style="left:970px;top:83px;font-size:12px;line-height:16px;letter-spacing:-0.3px">Markers</div>
<div class="t" style="left:10px;top:743px;letter-spacing:-0.05px">Selects a specified configuration (multiple items).</div>
<div class="a" style="left:617px;top:78px;width:215px;height:629px;background:#f0f0f0;border:1px solid #979797;box-shadow:inset 1px 1px 0 #f7f7f7,inset -1px -1px 0 #f7f7f7,1px 1px 0 rgba(0,0,0,0.28),2px 2px 1px rgba(0,0,0,0.22),3px 3px 2px rgba(0,0,0,0.12)"></div>
<div class="a" style="left:647px;top:80px;width:1px;height:623px;background:#e2e3e3"></div>
<div class="a" style="left:620px;top:125px;width:209px;height:22px;background:#d1e3f5;border:1px solid #84b4e6"></div>
<div class="a" style="left:620px;top:125px;width:22px;height:22px;background:#bddbf4;border:1px solid #7ab2e4"></div>
<svg style="left:626px;top:131px" width="11" height="10"><path d="M1 5L4 8.5L10 1" fill="none" stroke="#222" stroke-width="2.2"/></svg>
<div class="t" style="left:653px;top:85px;letter-spacing:-0.2px">Bat</div>
<div class="t" style="left:653px;top:107px;letter-spacing:-0.2px">C#</div>
<div class="t" style="left:653px;top:129px;letter-spacing:-0.2px">C++</div>
<div class="t" style="left:653px;top:151px;letter-spacing:-0.2px">CSS</div>
<div class="t" style="left:653px;top:173px;letter-spacing:-0.2px">EmEditor Syntax</div>
<div class="t" style="left:653px;top:195px;letter-spacing:-0.2px">HTML</div>
<div class="t" style="left:653px;top:217px;letter-spacing:-0.2px">Ini</div>
<div class="t" style="left:653px;top:239px;letter-spacing:-0.2px">Java</div>
<div class="t" style="left:653px;top:261px;letter-spacing:-0.2px">JavaScript</div>
<div class="t" style="left:653px;top:283px;letter-spacing:-0.2px">JavaScript for EmEditor</div>
<div class="t" style="left:653px;top:305px;letter-spacing:-0.2px">JSP</div>
<div class="t" style="left:653px;top:327px;letter-spacing:-0.2px">Pascal</div>
<div class="t" style="left:653px;top:349px;letter-spacing:-0.2px">Perl</div>
<div class="t" style="left:653px;top:371px;letter-spacing:-0.2px">PerlScript</div>
<div class="t" style="left:653px;top:393px;letter-spacing:-0.2px">PHP</div>
<div class="t" style="left:653px;top:415px;letter-spacing:-0.2px">Python</div>
<div class="t" style="left:653px;top:437px;letter-spacing:-0.2px">RHTML</div>
<div class="t" style="left:653px;top:459px;letter-spacing:-0.2px">Ruby</div>
<div class="t" style="left:653px;top:481px;letter-spacing:-0.2px">Script</div>
<div class="t" style="left:653px;top:503px;letter-spacing:-0.2px">SQL</div>
<div class="t" style="left:653px;top:525px;letter-spacing:-0.2px">TeX</div>
<div class="t" style="left:653px;top:547px;letter-spacing:-0.2px">Text</div>
<div class="t" style="left:653px;top:569px;letter-spacing:-0.2px">VBScript</div>
<div class="t" style="left:653px;top:591px;letter-spacing:-0.2px">VBScript for EmEditor</div>
<div class="t" style="left:653px;top:613px;letter-spacing:-0.2px">Windows Script</div>
<div class="t" style="left:653px;top:635px;letter-spacing:-0.2px">x86 Assembler</div>
<div class="t" style="left:653px;top:657px;letter-spacing:-0.2px">XML</div>
<div class="a" style="left:648px;top:678px;width:181px;height:1px;background:#d7d7d7"></div>
<div class="t" style="left:653px;top:686px;letter-spacing:-0.05px">Define Configurations...</div>
</body></html>
